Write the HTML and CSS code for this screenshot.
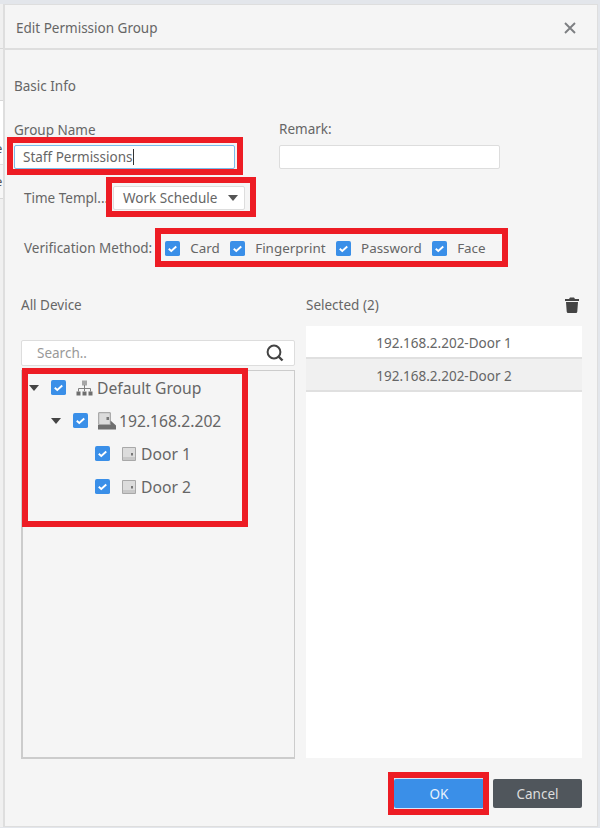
FILE: index.html
```html
<!DOCTYPE html>
<html lang="en">
<head>
<meta charset="utf-8">
<title>Edit Permission Group</title>
<link rel="stylesheet" href="styles.css">
</head>
<body>
<div class="page">
  <div class="behind">
    <div class="behind-a"></div>
    <div class="behind-b"></div>
    <div class="behind-row behind-row-1"><span>e</span></div>
    <div class="behind-row behind-row-2"><span>e</span></div>
  </div>
  <section class="dialog">
    <header class="dialog-head">
      <h1 class="dialog-title">Edit Permission Group</h1>
      <svg class="close" viewBox="0 0 12 12" width="12" height="12"><path d="M1 1l10 10M11 1L1 11" stroke="#7d7f82" stroke-width="1.9" fill="none"/></svg>
    </header>
    <div class="dialog-body">
      <div class="section-title">Basic Info</div>
      <div class="name-row">
        <div class="field field-name">
          <label class="field-label">Group Name</label>
          <div class="input input-focus"><span>Staff Permissions</span><i class="caret"></i><div class="mark mark-name"></div></div>
        </div>
        <div class="field field-remark">
          <label class="field-label field-label-up">Remark:</label>
          <div class="input input-remark"></div>
        </div>
      </div>
      <div class="time-row">
        <span class="row-label label-time">Time Templ...</span>
        <div class="select"><span>Work Schedule</span><i class="arrow"></i><div class="mark mark-time"></div></div>
      </div>
      <div class="verify-row">
        <span class="row-label">Verification Method:</span>
        <div class="methods">
          <span class="method"><svg class="check" viewBox="0 0 16 16"><rect width="16" height="16" rx="2" fill="#3a8fe8"/><path d="M4 8.2l2.7 2.4L12 5.8" stroke="#fff" stroke-width="2" fill="none"/></svg>Card</span>
          <span class="method"><svg class="check" viewBox="0 0 16 16"><rect width="16" height="16" rx="2" fill="#3a8fe8"/><path d="M4 8.2l2.7 2.4L12 5.8" stroke="#fff" stroke-width="2" fill="none"/></svg>Fingerprint</span>
          <span class="method"><svg class="check" viewBox="0 0 16 16"><rect width="16" height="16" rx="2" fill="#3a8fe8"/><path d="M4 8.2l2.7 2.4L12 5.8" stroke="#fff" stroke-width="2" fill="none"/></svg>Password</span>
          <span class="method"><svg class="check" viewBox="0 0 16 16"><rect width="16" height="16" rx="2" fill="#3a8fe8"/><path d="M4 8.2l2.7 2.4L12 5.8" stroke="#fff" stroke-width="2" fill="none"/></svg>Face</span>
        </div>
        <div class="mark mark-verify"></div>
      </div>
      <div class="columns">
        <div class="col-left">
          <div class="col-title">All Device</div>
          <div class="search">
            <span>Search..</span>
            <svg class="search-icon" viewBox="0 0 18 18" width="18" height="18"><circle cx="8" cy="8" r="6.4" stroke="#444" stroke-width="2" fill="none"/><path d="M12.5 12.5l4 4" stroke="#444" stroke-width="2.4"/></svg>
          </div>
          <div class="tree">
            <div class="tree-row lvl-0">
              <i class="tree-arrow"></i>
              <svg class="check" viewBox="0 0 16 16"><rect width="16" height="16" rx="2" fill="#3a8fe8"/><path d="M4 8.2l2.7 2.4L12 5.8" stroke="#fff" stroke-width="2" fill="none"/></svg>
              <svg class="node-icon" viewBox="0 0 17 16" width="17" height="16"><path d="M6 0.5h5v5H6z" fill="#a6a6a6"/><path d="M0.5 11.5h4v4h-4zM6.5 11.5h4v4h-4zM12.5 11.5h4v4h-4z" fill="#6e6e6e"/><path d="M8.5 5v6M2.5 11.5V8.5h12v3" stroke="#808080" fill="none"/></svg>
              <span>Default Group</span>
            </div>
            <div class="tree-row lvl-1">
              <i class="tree-arrow"></i>
              <svg class="check" viewBox="0 0 16 16"><rect width="16" height="16" rx="2" fill="#3a8fe8"/><path d="M4 8.2l2.7 2.4L12 5.8" stroke="#fff" stroke-width="2" fill="none"/></svg>
              <svg class="device-icon" viewBox="0 0 18 18" width="18" height="18"><path d="M0.7 0.7h11.6v12H0.7z" fill="#dcdcdc" stroke="#9a9a9a"/><path d="M8.5 5h2.5v3H8.5z" fill="#777"/><path d="M0 13h12.5V8.5L18 13.5V17.500H0z" fill="#6f6f6f"/></svg>
              <span>192.168.2.202</span>
            </div>
            <div class="tree-row lvl-2">
              <svg class="check" viewBox="0 0 16 16"><rect width="16" height="16" rx="2" fill="#3a8fe8"/><path d="M4 8.2l2.7 2.4L12 5.8" stroke="#fff" stroke-width="2" fill="none"/></svg>
              <svg class="door-icon" viewBox="0 0 14 14" width="14" height="14"><path d="M0.5 0.5h13v13H0.5z" fill="#dcdcdc" stroke="#a8a8a8"/><path d="M1 10h12v3H1z" fill="#c8c8c8"/><path d="M9 6h2v2.500H9z" fill="#777"/></svg>
              <span>Door 1</span>
            </div>
            <div class="tree-row lvl-2">
              <svg class="check" viewBox="0 0 16 16"><rect width="16" height="16" rx="2" fill="#3a8fe8"/><path d="M4 8.2l2.7 2.4L12 5.8" stroke="#fff" stroke-width="2" fill="none"/></svg>
              <svg class="door-icon" viewBox="0 0 14 14" width="14" height="14"><path d="M0.5 0.5h13v13H0.5z" fill="#dcdcdc" stroke="#a8a8a8"/><path d="M1 10h12v3H1z" fill="#c8c8c8"/><path d="M9 6h2v2.500H9z" fill="#777"/></svg>
              <span>Door 2</span>
            </div>
            <div class="mark mark-tree"></div>
          </div>
        </div>
        <div class="col-right">
          <div class="selected-head">
            <span class="col-title">Selected (2)</span>
            <svg class="trash" viewBox="0 0 14 16" width="14" height="16"><path d="M5 0.5h4l1 1.5h4v2H0V2h4z" fill="#444"/><path d="M1 5h12l-0.7 9.5a1.5 1.5 0 0 1-1.5 1.5H3.2a1.5 1.5 0 0 1-1.5-1.5z" fill="#444"/></svg>
          </div>
          <div class="selected-list">
            <div class="selected-item">192.168.2.202-Door 1</div>
            <div class="selected-item is-alt">192.168.2.202-Door 2</div>
          </div>
        </div>
      </div>
      <div class="actions">
        <button class="btn btn-ok">OK<span class="mark mark-ok"></span></button>
        <button class="btn btn-cancel">Cancel</button>
      </div>
    </div>
  </section>
</div>
</body>
</html>
```
FILE: styles.css
```css
* { box-sizing: border-box; }
html, body { margin: 0; padding: 0; }
body {
  width: 600px;
  height: 828px;
  overflow: hidden;
  background: #e3e6eb;
  font-family: "Noto Sans", "Open Sans", sans-serif;
  font-size: 13.5px;
  color: #666;
}
.page { display: flex; height: 828px; padding-top: 4px; align-items: flex-start; }
.behind { width: 3px; flex: none; overflow: hidden; background: #f0f0f0; height: 823px; }
.behind-a { height: 45px; border-bottom: 1px solid #d8d8d8; }
.behind-b { height: 52px; border-bottom: 1px solid #d8d8d8; }
.behind-row { background: #fff; font-size: 13px; display: flex; align-items: flex-end; }
.behind-row span { display: block; margin-left: -5px; color: #555; }
.behind-row-1 { height: 64px; line-height: 32px; border-bottom: 1px solid #e2e2e2; }
.behind-row-2 { height: 34px; line-height: 33px; border-bottom: 1px solid #d8d8d8; background: #f7f7f7; }
.dialog {
  width: 595px;
  height: 823px;
  background: #f5f5f5;
  border: 1px solid #dedede;
  border-left-width: 2px;
  display: flex;
  flex-direction: column;
}
.dialog-head {
  height: 45px;
  flex: none;
  border-bottom: 2px solid #dedede;
  display: flex;
  align-items: center;
  justify-content: space-between;
  padding: 2px 21px 0 11px;
}
.dialog-title { margin: 0; font-size: 13.5px; font-weight: 400; color: #666; }
.dialog-body { flex: 1; padding: 0 15px 0 9px; display: flex; flex-direction: column; min-height: 0; }
.section-title { margin-top: 26px; line-height: 20px; }
.name-row { display: flex; margin-top: 25px; }
.field-name { width: 265px; }
.field-label { display: block; line-height: 18px; height: 18px; }
.field-label-up { line-height: 16px; }
.input {
  height: 24px;
  background: #fff;
  border: 1px solid #ddd;
  border-radius: 2px;
  margin-top: 6px;
  display: flex;
  align-items: center;
  padding-left: 8px;
  position: relative;
}
.input-focus { width: 221px; border-color: #79bbeb; }
.input-remark { width: 221px; }
.caret { width: 1px; height: 16px; background: #333; }
.time-row { display: flex; align-items: center; margin-top: 17px; margin-left: 10px; }
.row-label { white-space: nowrap; line-height: 18px; }
.label-time { width: 89px; }
.select {
  width: 132px;
  height: 24px;
  background: #fff;
  border: 1px solid #ddd;
  border-radius: 2px;
  display: flex;
  align-items: center;
  justify-content: space-between;
  padding: 0 6px 0 9px;
  position: relative;
}
.arrow { width: 0; height: 0; border-left: 5px solid transparent; border-right: 5px solid transparent; border-top: 6px solid #555; }
.verify-row { display: flex; align-items: center; margin-top: 29px; margin-left: 10px; position: relative; height: 18px; }
.methods { display: flex; margin-left: 13px; font-size: 13.4px; }
.method { display: inline-flex; align-items: center; gap: 10px; margin-right: 10.5px; white-space: nowrap; }
.check { width: 15px; height: 15px; flex: none; }
.columns { display: flex; margin-top: 39px; flex: 1; min-height: 0; }
.col-left { width: 274px; flex: none; margin-left: 7px; display: flex; flex-direction: column; }
.col-title { line-height: 18px; }
.search {
  margin-top: 26px;
  height: 26px;
  flex: none;
  background: #fff;
  border: 1px solid #ddd;
  border-radius: 2px;
  display: flex;
  align-items: center;
  justify-content: space-between;
  padding: 0 10px 0 15px;
  color: #999;
}
.tree {
  margin-top: 4px;
  height: 389px;
  flex: none;
  border: 1px solid #ccc;
  border-width: 1px 1px 2px 2px;
  position: relative;
  font-size: 15.7px;
}
.tree-row { display: flex; align-items: center; height: 33px; white-space: nowrap; }
.tree-arrow { width: 0; height: 0; border-left: 5.5px solid transparent; border-right: 5.5px solid transparent; border-top: 6px solid #444; }
.lvl-0 { padding-left: 6px; }
.lvl-0 .check { margin-left: 12px; }
.lvl-0 .node-icon { margin-left: 10px; margin-right: 4px; }
.lvl-1 { padding-left: 28px; }
.lvl-1 .check { margin-left: 12px; }
.lvl-1 .device-icon { margin-left: 10px; margin-right: 3px; }
.lvl-2 { padding-left: 72px; }
.door-icon { margin-left: 12px; margin-right: 5px; }
.col-right { width: 276px; flex: none; margin-left: 11px; display: flex; flex-direction: column; }
.selected-head { display: flex; justify-content: space-between; align-items: center; height: 18px; flex: none; padding-right: 3px; }
.selected-list { margin-top: 12px; height: 432px; flex: none; background: #fff; }
.selected-item { height: 33px; line-height: 35px; text-align: center; border-bottom: 2px solid #e0e0e0; }
.is-alt { background: #f0f0f0; }
.actions { display: flex; justify-content: flex-end; gap: 9px; height: 68px; flex: none; padding-top: 21px; }
.btn { height: 29px; border: 0; border-radius: 2px; font: inherit; color: #fff; position: relative; }
.btn-ok { width: 90px; background: #3a8fe8; color: #e8f2fc; box-shadow: 0 0 0 1px #d5e6f8; }
.btn-cancel { width: 89px; background: #50565c; color: #ddd; }
.mark { position: absolute; border: 6px solid #ed1c24; pointer-events: none; }
.mark-name { left: -8px; top: -9px; width: 236px; height: 38px; }
.mark-time { left: -8px; top: -10px; width: 150px; height: 40px; }
.mark-verify { left: 131px; top: -11px; width: 353px; height: 39px; }
.mark-tree { left: -1px; top: -3px; width: 226px; height: 159px; }
.mark-ok { left: -6px; top: -7px; width: 101px; height: 43px; }
```
